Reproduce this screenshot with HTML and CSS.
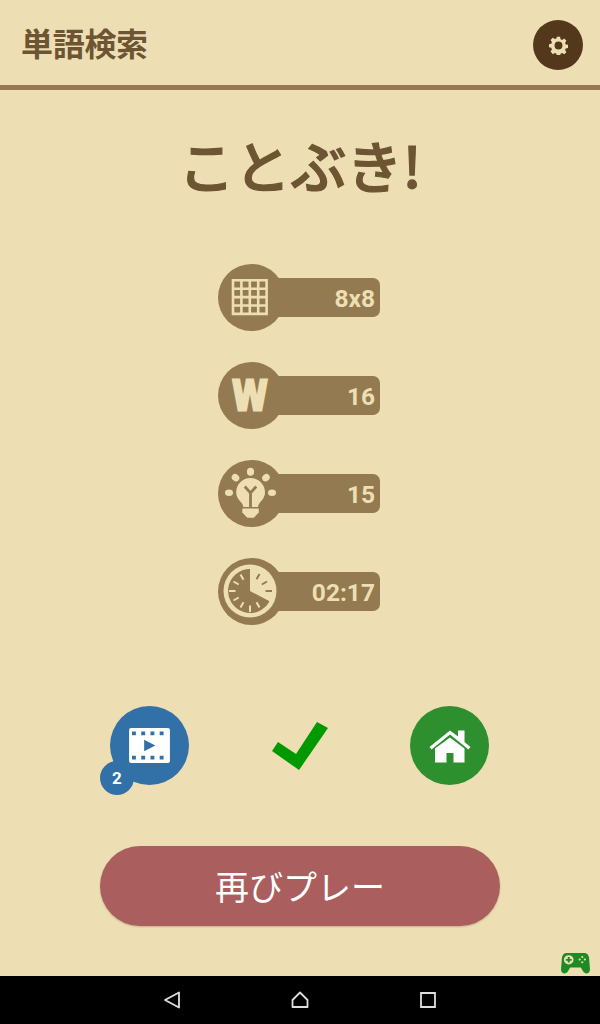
FILE: index.html
```html
<!DOCTYPE html>
<html lang="ja">
<head>
  <meta charset="UTF-8" />
  <meta name="viewport" content="width=device-width, initial-scale=1.0"/>
  <title>単語検索</title>
  <link rel="stylesheet" href="styles.css">
</head>
<body>
  <div class="screen">
    <header class="topbar">
      <h1 class="app-title">単語検索</h1>
      <button class="settings-btn">
        <svg width="19" height="19" viewBox="0 0 24 24">
          <path fill="#eddfb3" fill-rule="evenodd" d="M10 1h4l.6 3 2 .9 2.600-1.700 2.800 2.800-1.700 2.600.8 2 3 .6v4l-3 .6-.8 2 1.700 2.600-2.800 2.800-2.600-1.700-2 .8-.6 3h-4l-.6-3-2-.8-2.600 1.700L2 19.500l1.700-2.600-.8-2-3-.6v-4l3-.6.8-2L2 5l2.800-2.800 2.600 1.700 2-.9zM12 7a5 5 0 1 0 0 10 5 5 0 0 0 0-10z"/>
        </svg>
      </button>
    </header>

    <main class="content">
      <h2 class="result-title">ことぶき!</h2>

      <ul class="stats">
        <li class="stat">
          <span class="stat-icon">
            <svg width="67" height="67" viewBox="0 0 67 67">
              <path fill="none" stroke="#eddfb3" stroke-width="2.600" d="M15 16.300h33.600v33.600H15zM23.400 16.300v33.600M31.800 16.300v33.600M40.200 16.300v33.600M15 24.700h33.600M15 33.100h33.600M15 41.500h33.600"/>
            </svg>
          </span>
          <span class="stat-value">8x8</span>
        </li>
        <li class="stat">
          <span class="stat-icon"><span class="w-glyph">W</span></span>
          <span class="stat-value">16</span>
        </li>
        <li class="stat">
          <span class="stat-icon">
            <svg width="67" height="67" viewBox="0 0 67 67">
              <g fill="#eddfb3">
                <ellipse cx="32.500" cy="11.700" rx="3.600" ry="4"/>
                <ellipse cx="17.500" cy="17.700" rx="4" ry="3.400" transform="rotate(40 17.500 17.700)"/>
                <ellipse cx="48" cy="17.700" rx="4" ry="3.400" transform="rotate(-40 48 17.700)"/>
                <ellipse cx="11" cy="32.700" rx="4" ry="3.300"/>
                <ellipse cx="54" cy="32.700" rx="4" ry="3.300"/>
                <path d="M32.500 18c8 0 14.500 6.300 14.500 14.300 0 5.700-3.700 8.500-5.700 11.200-.8 1.100-1 2.500-1.400 3.500H25.400c-.4-1-.6-2.400-1.400-3.500-2-2.700-5.800-5.500-5.800-11.200C18.200 24.300 24.500 18 32.500 18z"/>
                <path d="M24.300 48.500h16.500v4l-5 5.300h-6.500l-5-5.300z"/>
              </g>
              <path fill="none" stroke="#947a50" stroke-width="2.800" d="M32.500 47V33M26.800 26.500l5.700 6.500 5.700-6.500"/>
            </svg>
          </span>
          <span class="stat-value">15</span>
        </li>
        <li class="stat">
          <span class="stat-icon">
            <svg width="67" height="67" viewBox="0 0 67 67">
              <circle cx="32" cy="33" r="26.500" fill="#eddfb3"/>
              <path fill="#947a50" d="M32 33V11A22 22 0 1 0 51.500 43.300z"/>
              <path fill="none" stroke="#947a50" stroke-width="2" d="M41.500 16l-3 5.200M49 23.500l-5.200 3M54 33h-6.500"/>
              <path fill="none" stroke="#eddfb3" stroke-width="2" d="M11 33h6.500M15.500 23.500l5.200 3M22.500 16.500l3 5.200M15.500 42.500l5.200-3M22.500 49.500l3-5.200M32 54v-6.500M41.500 49.500l-3-5.200"/>
            </svg>
          </span>
          <span class="stat-value">02:17</span>
        </li>
      </ul>

      <div class="actions">
        <div class="video-wrap">
          <button class="round-btn round-blue">
            <svg width="41" height="35" viewBox="0 0 42 36">
              <path fill="#fff" fill-rule="evenodd" d="M2 0h38a2 2 0 0 1 2 2v32a2 2 0 0 1-2 2H2a2 2 0 0 1-2-2V2a2 2 0 0 1 2-2zM3 3.500v4h4v-4zM12.500 3.500v4h4v-4zM22 3.500v4h4v-4zM31.500 3.500v4h4v-4zM3 28.500v4h4v-4zM12.500 28.500v4h4v-4zM22 28.500v4h4v-4zM31.500 28.500v4h4v-4zM15.500 12v12l11.500-6z"/>
            </svg>
          </button>
          <span class="badge">2</span>
        </div>

        <svg class="check" width="56" height="48" viewBox="0 0 56 48">
          <path fill="#009900" d="M45 0l11 6-29 42L0 29l6-9 18 12z"/>
        </svg>

        <button class="round-btn round-green">
          <svg width="42" height="34" viewBox="0 0 42 34">
            <path fill="#fff" d="M.5 18L21 1.500l8 6V1.500h6.500V13l6 5-2 2.500L21 5.500 2.500 20.500z"/>
            <path fill="#fff" d="M21 8.500l14.500 11V33.500H24.500V24h-7v9.500H6V19.500z"/>
          </svg>
        </button>
      </div>

      <button class="replay-btn">再びプレー</button>

      <svg class="gamepad" width="29" height="21" viewBox="0 0 30 23" preserveAspectRatio="none">
        <path fill="#1f8a24" fill-rule="evenodd" d="M6 0h18c3 0 4.500 2 5 5l1 13c0 3-2 4.500-3.500 4.500-1.500 0-3-1-4-3l-2-3.500H9.500l-2 3.500c-1 2-2.500 3-4 3C2 22.500 0 21 0 18L1 5c.5-3 2-5 5-5z"/>
        <g fill="#eddfb3">
          <path fill-rule="evenodd" d="M8 2.500a5 5 0 1 1 0 10 5 5 0 0 1 0-10zM7 4.500v2H5v2h2v2h2v-2h2v-2H9v-2z"/>
          <circle cx="22" cy="4.500" r="1.100"/><circle cx="22" cy="10" r="1.100"/><circle cx="19.300" cy="7.200" r="1.100"/><circle cx="24.700" cy="7.200" r="1.100"/>
        </g>
      </svg>
    </main>

    <nav class="navbar">
      <svg width="18" height="18" viewBox="0 0 18 18"><path fill="none" stroke="#dedede" stroke-width="1.800" stroke-linejoin="round" d="M16 1.500v15L2 9z"/></svg>
      <svg width="18" height="18" viewBox="0 0 18 18"><path fill="none" stroke="#dedede" stroke-width="1.800" stroke-linejoin="round" d="M9 1.500L16.500 9v7H1.500V9z"/></svg>
      <svg width="18" height="18" viewBox="0 0 18 18"><path fill="none" stroke="#dedede" stroke-width="1.800" d="M2 2h14v14H2z"/></svg>
    </nav>
  </div>
</body>
</html>
```

FILE: styles.css
```css
body {
  margin: 0;
  font-family: "Noto Sans CJK JP", "Noto Sans", sans-serif;
  background: #eddfb3;
}
button {
  border: none;
  padding: 0;
  font-family: inherit;
}
.screen {
  width: 600px;
  height: 1024px;
  display: flex;
  flex-direction: column;
  overflow: hidden;
}
.topbar {
  height: 85px;
  flex: none;
  padding: 0 17px 0 21px;
  display: flex;
  align-items: center;
  justify-content: space-between;
  border-bottom: 5px solid #947a50;
}
.app-title {
  margin: 0 0 2px;
  font-size: 32px;
  font-weight: 700;
  line-height: 46px;
  letter-spacing: -0.3px;
  color: #6d5533;
}
.settings-btn {
  width: 50px;
  height: 50px;
  margin-top: 5px;
  border-radius: 50%;
  background: #54381b;
  display: flex;
  align-items: center;
  justify-content: center;
}
.content {
  position: relative;
  flex: 1;
  display: flex;
  flex-direction: column;
  align-items: center;
}
.result-title {
  margin: 34px 0 2px;
  font-size: 56px;
  font-weight: 500;
  line-height: 80px;
  color: #6d5533;
  -webkit-text-stroke: 1.2px #6d5533;
  stroke-linejoin: round;
}
.stats {
  list-style: none;
  margin: 58px 2px 0 0;
  padding: 0;
  width: 162px;
  display: flex;
  flex-direction: column;
  gap: 31px;
}
.stat {
  height: 67px;
  display: flex;
  align-items: center;
}
.stat-icon {
  width: 67px;
  height: 67px;
  flex: none;
  border-radius: 50%;
  background: #947a50;
  display: flex;
  align-items: center;
  justify-content: center;
  overflow: hidden;
}
.stat-value {
  flex: 1;
  height: 39px;
  margin-left: -7px;
  padding-right: 5px;
  border-radius: 0 7px 7px 0;
  background: #947a50;
  color: #eddfb3;
  font-family: Roboto, sans-serif;
  font-size: 24.5px;
  font-weight: 700;
  line-height: 42px;
  text-align: right;
}
.w-glyph {
  margin-right: 3px;
  font-family: "DejaVu Sans", sans-serif;
  font-size: 32px;
  font-weight: 700;
  line-height: 1;
  color: #eddfb3;
  transform: scale(1, 1.25);
  -webkit-text-stroke: 2.5px #eddfb3;
}
.actions {
  margin: 81px 1px 0 0;
  width: 379px;
  display: flex;
  align-items: center;
  justify-content: space-between;
}
.video-wrap {
  position: relative;
  display: flex;
}
.round-btn {
  width: 79px;
  height: 79px;
  border-radius: 50%;
  display: flex;
  align-items: center;
  justify-content: center;
}
.round-blue {
  background: #3270a8;
}
.round-green {
  background: #2e8f2e;
}
.badge {
  position: absolute;
  left: -10px;
  bottom: -10px;
  width: 34px;
  height: 34px;
  border-radius: 50%;
  background: #3270a8;
  color: #fff;
  font-family: Roboto, sans-serif;
  font-size: 17px;
  font-weight: 700;
  line-height: 34px;
  text-align: center;
}
.replay-btn {
  margin-top: 61px;
  width: 400px;
  height: 80px;
  border-radius: 40px;
  background: #aa5e5e;
  box-shadow: 0 1px 2px rgba(0, 0, 0, 0.2);
  color: #fff;
  font-size: 34px;
  line-height: 72px;
}
.gamepad {
  position: absolute;
  right: 10px;
  bottom: 2px;
}
.navbar {
  height: 48px;
  flex: none;
  background: #000;
  display: flex;
  align-items: center;
  justify-content: center;
  gap: 110px;
}
```
